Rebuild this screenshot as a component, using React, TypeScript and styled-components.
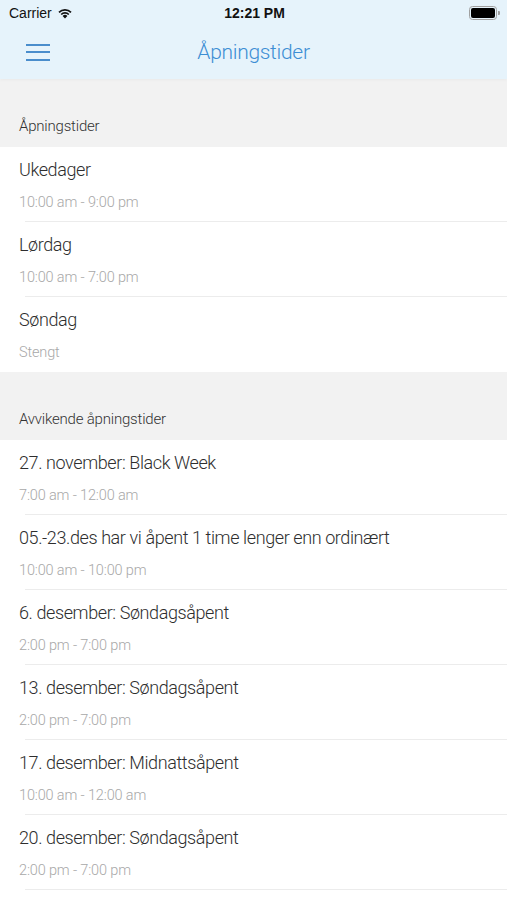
import styled, { createGlobalStyle } from 'styled-components';

const GlobalStyle = createGlobalStyle`
  html, body {
    margin: 0;
    padding: 0;
    background: #ffffff;
  }
  body {
    font-family: 'Roboto', 'Liberation Sans', sans-serif;
  }
`;

const regular = [
  { title: 'Ukedager', time: '10:00 am - 9:00 pm' },
  { title: 'Lørdag', time: '10:00 am - 7:00 pm' },
  { title: 'Søndag', time: 'Stengt' },
];

const deviating = [
  { title: '27. november: Black Week', time: '7:00 am - 12:00 am' },
  {
    title: '05.-23.des har vi åpent 1 time lenger enn ordinært',
    time: '10:00 am - 10:00 pm',
  },
  { title: '6. desember: Søndagsåpent', time: '2:00 pm - 7:00 pm' },
  { title: '13. desember: Søndagsåpent', time: '2:00 pm - 7:00 pm' },
  { title: '17. desember: Midnattsåpent', time: '10:00 am - 12:00 am' },
  { title: '20. desember: Søndagsåpent', time: '2:00 pm - 7:00 pm' },
];

const Page = styled.div`
  width: 507px;
  min-height: 900px;
  background: #ffffff;
`;

const Header = styled.header`
  background: #e6f3fb;
  position: relative;
  z-index: 1;
  box-shadow: 0 1px 3px rgba(0, 0, 0, 0.04);
`;

const StatusBar = styled.div`
  height: 25px;
  display: grid;
  grid-template-columns: 1fr auto 1fr;
  align-items: center;
  padding: 0 7px 0 9px;
  font-family: 'Liberation Sans', Arial, sans-serif;
  font-size: 14px;
  color: #111;
`;

const Carrier = styled.div`
  display: flex;
  align-items: center;
  gap: 5px;
`;

const Clock = styled.div`
  font-weight: bold;
  font-size: 14px;
`;

const Battery = styled.div`
  justify-self: end;
  display: flex;
  align-items: center;
`;

const BatteryBody = styled.div`
  width: 24px;
  height: 10px;
  border: 1.5px solid #a0a0a0;
  border-radius: 3.5px;
  padding: 1px;
  box-sizing: content-box;
  display: flex;
`;

const BatteryFill = styled.div`
  flex: 1;
  background: #000;
  border-radius: 2px;
`;

const BatteryNub = styled.div`
  width: 2px;
  height: 4px;
  margin-left: 1px;
  background: #a0a0a0;
  border-radius: 0 1px 1px 0;
`;

const NavBar = styled.div`
  height: 54px;
  display: grid;
  grid-template-columns: 60px 1fr 60px;
  align-items: center;
`;

const MenuButton = styled.button`
  border: none;
  background: none;
  padding: 0 0 0 26px;
  display: flex;
  flex-direction: column;
  gap: 5.5px;
  width: 60px;
  cursor: pointer;
`;

const MenuLine = styled.span`
  display: block;
  width: 24px;
  height: 2px;
  background: #4a8dcc;
`;

const NavTitle = styled.h1`
  margin: 0;
  text-align: center;
  font-weight: 300;
  font-size: 21px;
  color: #3d8ed4;
  letter-spacing: -0.3px;
`;

const SectionHeader = styled.div`
  background: #f2f2f2;
  padding: 37px 19px 11px;
  font-size: 15px;
  font-weight: 300;
  line-height: 20px;
  color: #333;
  letter-spacing: -0.2px;
`;

const Row = styled.div<{ $divider: boolean }>`
  position: relative;
  padding: 11px 19px 9px;
  height: 75px;
  box-sizing: border-box;
  display: flex;
  flex-direction: column;
  &::after {
    content: '';
    display: ${p => (p.$divider ? 'block' : 'none')};
    position: absolute;
    left: 25px;
    right: 0;
    bottom: 0;
    height: 1.5px;
    background: #ececec;
  }
`;

const RowTitle = styled.div`
  font-size: 18px;
  font-weight: 300;
  line-height: 24px;
  color: #2e2e2e;
  margin-bottom: 11px;
  white-space: nowrap;
  letter-spacing: -0.4px;
`;

const RowTime = styled.div`
  font-size: 14.5px;
  font-weight: 300;
  line-height: 20px;
  color: #a8a8a8;
  letter-spacing: -0.15px;
`;

function Wifi() {
  return (
    <svg width='16' height='12' viewBox='0 0 16 12'>
      <path d='M8 11.5 L5.6 8.9 A3.4 3.4 0 0 1 10.4 8.9 Z' fill='#111' />
      <path
        d='M3.6 6.9 A6.2 6.2 0 0 1 12.4 6.9 L11.2 8.1 A4.5 4.5 0 0 0 4.8 8.1 Z'
        fill='#111'
      />
      <path
        d='M1.4 4.7 A9.3 9.3 0 0 1 14.6 4.7 L13.4 5.9 A7.6 7.6 0 0 0 2.6 5.9 Z'
        fill='#111'
      />
    </svg>
  );
}

function Section({
  heading,
  items,
  continues = false,
}: {
  heading: string;
  items: { title: string; time: string }[];
  continues?: boolean;
}) {
  return (
    <section>
      <SectionHeader>{heading}</SectionHeader>
      <div>
        {items.map((item, i) => (
          <Row
            key={item.title}
            $divider={continues || i < items.length - 1}
          >
            <RowTitle>{item.title}</RowTitle>
            <RowTime>{item.time}</RowTime>
          </Row>
        ))}
      </div>
    </section>
  );
}

export default function App() {
  return (
    <Page>
      <GlobalStyle />
      <Header>
        <StatusBar>
          <Carrier>
            Carrier
            <Wifi />
          </Carrier>
          <Clock>12:21 PM</Clock>
          <Battery>
            <BatteryBody>
              <BatteryFill />
            </BatteryBody>
            <BatteryNub />
          </Battery>
        </StatusBar>
        <NavBar>
          <MenuButton aria-label='Meny'>
            <MenuLine />
            <MenuLine />
            <MenuLine />
          </MenuButton>
          <NavTitle>Åpningstider</NavTitle>
          <div />
        </NavBar>
      </Header>
      <Section heading='Åpningstider' items={regular} />
      <Section heading='Avvikende åpningstider' items={deviating} continues />
    </Page>
  );
}
